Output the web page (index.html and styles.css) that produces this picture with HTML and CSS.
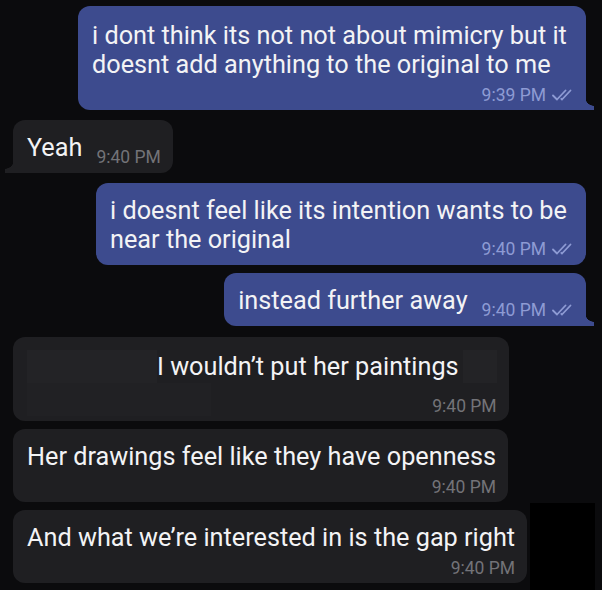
FILE: index.html
```html
<!DOCTYPE html>
<html lang="en">
<head>
<meta charset="utf-8">
<title>Chat</title>
<link rel="stylesheet" href="styles.css">
</head>
<body>
<main class="chat">
  <div class="bubble out tail-right lead">
    <p class="text">i dont think its not not about mimicry but it doesnt add anything to the original to me</p>
    <div class="meta meta-below"><span class="time">9:39 PM</span><svg class="checks" viewBox="0 0 22 12"><path d="M1 6.5 L5 10.5 L13.5 1.5"/><path d="M9.3 9.8 L10 10.5 L18.5 1.5"/></svg></div>
  </div>

  <div class="bubble in tail-left new-sender">
    <p class="text">Yeah<span class="meta meta-inline"><span class="time">9:40 PM</span></span></p>
  </div>

  <div class="bubble out narrow new-sender">
    <p class="text">i doesnt feel like its intention wants to be near the original<span class="meta meta-inline"><span class="time">9:40 PM</span><svg class="checks" viewBox="0 0 22 12"><path d="M1 6.5 L5 10.5 L13.5 1.5"/><path d="M9.3 9.8 L10 10.5 L18.5 1.5"/></svg></span></p>
  </div>

  <div class="bubble out tail-right">
    <p class="text">instead further away<span class="meta meta-inline"><span class="time">9:40 PM</span><svg class="checks" viewBox="0 0 22 12"><path d="M1 6.5 L5 10.5 L13.5 1.5"/><path d="M9.3 9.8 L10 10.5 L18.5 1.5"/></svg></span></p>
  </div>

  <div class="bubble in redacted new-sender">
    <div class="redact-line"><span class="patch patch-a"></span><p class="text">I wouldn’t put her paintings</p><span class="patch patch-b"></span></div>
    <div class="meta redact-meta"><span class="patch patch-c"></span><span class="time">9:40 PM</span></div>
  </div>

  <div class="bubble in">
    <p class="text">Her drawings feel like they have openness</p>
    <div class="meta meta-below"><span class="time">9:40 PM</span></div>
  </div>

  <div class="last-row">
    <div class="bubble in">
      <p class="text">And what we’re interested in is the gap right</p>
      <div class="meta meta-below"><span class="time">9:40 PM</span></div>
    </div>
    <div class="blackout"></div>
  </div>
</main>
</body>
</html>
```
FILE: styles.css
```css
* { box-sizing: border-box; }
html, body { margin: 0; padding: 0; }
body {
  background: #0b0b0d;
  font-family: Roboto, "Noto Sans", "Liberation Sans", sans-serif;
  width: 602px;
  height: 590px;
  overflow: hidden;
}
.chat {
  display: flex;
  flex-direction: column;
  gap: 8px;
  padding: 6px 16px 0 13px;
}
.bubble {
  position: relative;
  border-radius: 12px;
  padding: 13px 12px 5px 14px;
  color: #f3f3f5;
  font-size: 25.25px;
  line-height: 29px;
}
.out { align-self: flex-end; background: #3d4b8e; max-width: 508px; }
.in { align-self: flex-start; background: #1f1f22; max-width: 520px; }
.lead { padding-top: 15px; }
.narrow { max-width: 490px; }
.new-sender { margin-top: 2px; }
.text { margin: 0; display: flow-root; }
.meta {
  font-size: 17.5px;
  line-height: 20px;
  white-space: nowrap;
  display: flex;
  align-items: baseline;
}
.out .meta { color: #8e9bd4; }
.in .meta { color: #737378; }
.meta-inline { float: right; margin: 14px 0 1px 14px; }
.meta-below { justify-content: flex-end; margin-top: 6px; }
.checks {
  width: 22px;
  height: 12px;
  margin-left: 6px;
  fill: none;
  stroke: currentColor;
  stroke-width: 1.8;
  stroke-linecap: round;
  stroke-linejoin: round;
}
.tail-right { border-bottom-right-radius: 0; }
.tail-right::after {
  content: "";
  position: absolute;
  right: -8px;
  bottom: 0;
  width: 9px;
  height: 13px;
  background: radial-gradient(circle at 100% 0, transparent 8.5px, #3d4b8e 9px);
}
.tail-left { border-bottom-left-radius: 0; }
.tail-left::before {
  content: "";
  position: absolute;
  left: -8px;
  bottom: 0;
  width: 9px;
  height: 13px;
  background: radial-gradient(circle at 0 0, transparent 8.5px, #1f1f22 9px);
}
.redacted { padding-top: 15px; margin-top: 3px; }
.redact-line { display: flex; align-items: center; }
.patch { display: block; flex: none; }
.patch-a { width: 130px; height: 33px; margin: -2px 0; background: #232326; }
.patch-b { width: 34px; height: 33px; margin: -2px 0 -2px 4px; background: #232326; }
.redact-meta { justify-content: space-between; align-items: flex-end; margin-top: 2px; }
.patch-c { width: 184px; height: 33px; background: #212124; }
.last-row { display: flex; align-items: flex-start; }
.last-row .bubble { flex: none; }
.blackout {
  flex: none;
  width: 65px;
  height: 88px;
  margin: -7px 0 0 3px;
  background: #000;
}
```
